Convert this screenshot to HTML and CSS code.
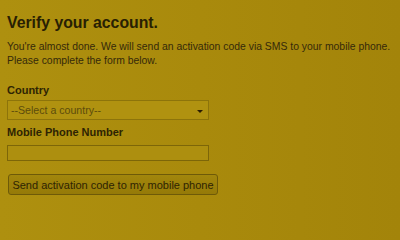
FILE: index.html
```html
<!DOCTYPE html>
<html>
<head>
<meta charset="utf-8">
<link rel="stylesheet" href="styles.css">
</head>
<body>
<div class="page">
  <h1 class="title">Verify your account.</h1>
  <p class="intro">You're almost done. We will send an activation code via SMS to your mobile phone.<br>Please complete the form below.</p>
  <div class="field">
    <label class="label">Country</label>
    <div class="select">
      <span class="select-text">--Select a country--</span>
      <span class="arrow"></span>
    </div>
  </div>
  <div class="field">
    <label class="label">Mobile Phone Number</label>
    <div class="input"></div>
  </div>
  <button class="btn">Send activation code to my mobile phone</button>
</div>
</body>
</html>
```
FILE: styles.css
```css
html, body {
  margin: 0;
  padding: 0;
}
body {
  width: 400px;
  height: 208px;
  overflow: hidden;
  background: linear-gradient(90deg, #ae900f 0%, #a98a0c 50%, #a3840a 100%);
  font-family: "Liberation Sans", Arial, sans-serif;
  color: #2e2403;
}
.page {
  padding: 13px 7px 0 7px;
  display: flex;
  flex-direction: column;
  align-items: flex-start;
}
.title {
  margin: 0;
  font-size: 15.8px;
  font-weight: bold;
  line-height: 20px;
  color: #282003;
}
.intro {
  margin: 7px 0 0 0;
  font-size: 10.4px;
  line-height: 14px;
  color: #35290a;
  white-space: nowrap;
}
.field {
  display: flex;
  flex-direction: column;
  margin-top: 16px;
}
.field + .field {
  margin-top: 6px;
}
.label {
  font-size: 11px;
  font-weight: bold;
  line-height: 13px;
  color: #2e2403;
}
.select {
  margin-top: 3px;
  border: 1px solid #8d740a;
  background: #b09210;
  display: flex;
  align-items: center;
  justify-content: space-between;
  padding: 0 5px 0 3px;
  box-sizing: border-box;
  width: 202px;
  height: 20px;
}
.select-text {
  font-size: 10.6px;
  color: #5c4c0c;
}
.arrow {
  width: 0;
  height: 0;
  border-left: 3px solid transparent;
  border-right: 3px solid transparent;
  border-top: 3px solid #2a1c02;
  margin-top: 2px;
}
.input {
  margin-top: 6px;
  width: 202px;
  height: 16px;
  box-sizing: border-box;
  border: 1px solid #7d6608;
  background: #ad8f0f;
}
.btn {
  margin-top: 13px;
  margin-left: 1px;
  width: 210px;
  height: 21px;
  padding: 0;
  font-family: "Liberation Sans", Arial, sans-serif;
  font-size: 11px;
  color: #2e2403;
  background: linear-gradient(#a2860c, #957a08);
  border: 1px solid #6e5a08;
  border-radius: 3px;
}
```
